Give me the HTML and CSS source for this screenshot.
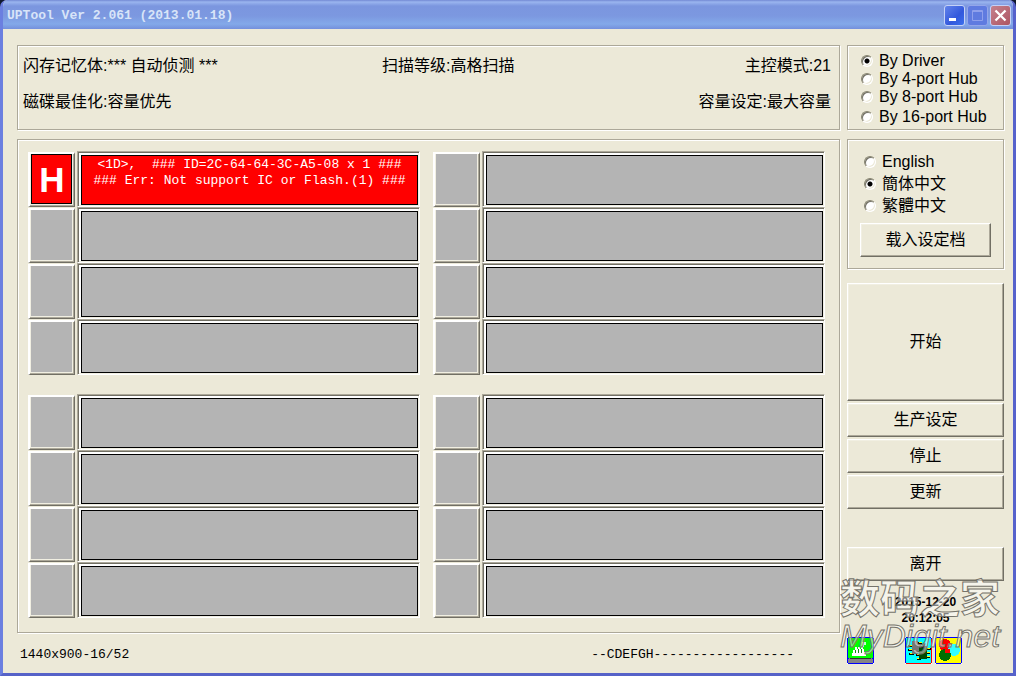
FILE: index.html
```html
<!DOCTYPE html>
<html lang="zh-CN">
<head>
<meta charset="utf-8">
<title>UPTool Ver 2.061</title>
<link rel="stylesheet" href="styles.css">
</head>
<body>
<div class="window">
  <header class="titlebar">
    <h1 class="title">UPTool Ver 2.061 (2013.01.18)</h1>
    <div class="caption-buttons">
      <button class="caption" type="button" aria-label="Minimize"><svg viewBox="0 0 19 19"><path d="M4 12h7v3H4z" fill="#fff"/></svg></button>
      <button class="caption caption-max" type="button" aria-label="Maximize" disabled><svg viewBox="0 0 19 19"><path d="M4.500 4.500h10v10h-10zM4 5.500h11" fill="none" stroke="#8fa0ec"/></svg></button>
      <button class="caption caption-close" type="button" aria-label="Close"><svg viewBox="0 0 19 19"><path d="M4.500 4.500l10 10M14.500 4.500l-10 10" stroke="#fff" stroke-width="2.300"/></svg></button>
    </div>
  </header>
  <div class="content">
    <main class="main">
      <section class="group info">
        <span>闪存记忆体:*** 自动侦测 ***</span>
        <span>扫描等级:高格扫描</span>
        <span class="info-right">主控模式:21</span>
        <span>磁碟最佳化:容量优先</span>
        <span class="info-right info-wide">容量设定:最大容量</span>
      </section>
      <section class="group ports">
        <div class="port active"><button type="button" class="slot">H</button><div class="status"><p class="message">&lt;1D&gt;,&nbsp; ### ID=2C-64-64-3C-A5-08 x 1 ###<br>### Err: Not support IC or Flash.(1) ###</p></div></div>
        <div class="port"><button type="button" class="slot" aria-label="Port 9"></button><div class="status"><p class="message"></p></div></div>
        <div class="port"><button type="button" class="slot" aria-label="Port 2"></button><div class="status"><p class="message"></p></div></div>
        <div class="port"><button type="button" class="slot" aria-label="Port 10"></button><div class="status"><p class="message"></p></div></div>
        <div class="port"><button type="button" class="slot" aria-label="Port 3"></button><div class="status"><p class="message"></p></div></div>
        <div class="port"><button type="button" class="slot" aria-label="Port 11"></button><div class="status"><p class="message"></p></div></div>
        <div class="port"><button type="button" class="slot" aria-label="Port 4"></button><div class="status"><p class="message"></p></div></div>
        <div class="port"><button type="button" class="slot" aria-label="Port 12"></button><div class="status"><p class="message"></p></div></div>
        <div class="port bank"><button type="button" class="slot" aria-label="Port 5"></button><div class="status"><p class="message"></p></div></div>
        <div class="port bank"><button type="button" class="slot" aria-label="Port 13"></button><div class="status"><p class="message"></p></div></div>
        <div class="port"><button type="button" class="slot" aria-label="Port 6"></button><div class="status"><p class="message"></p></div></div>
        <div class="port"><button type="button" class="slot" aria-label="Port 14"></button><div class="status"><p class="message"></p></div></div>
        <div class="port"><button type="button" class="slot" aria-label="Port 7"></button><div class="status"><p class="message"></p></div></div>
        <div class="port"><button type="button" class="slot" aria-label="Port 15"></button><div class="status"><p class="message"></p></div></div>
        <div class="port"><button type="button" class="slot" aria-label="Port 8"></button><div class="status"><p class="message"></p></div></div>
        <div class="port"><button type="button" class="slot" aria-label="Port 16"></button><div class="status"><p class="message"></p></div></div>
      </section>
      <footer class="footer"><span>1440x900-16/52</span><span>--CDEFGH------------------</span></footer>
    </main>
    <aside class="side">
      <div class="group hubs" role="radiogroup" aria-label="Hub">
        <label class="option"><input type="radio" name="hub" checked>By Driver</label>
        <label class="option"><input type="radio" name="hub">By 4-port Hub</label>
        <label class="option"><input type="radio" name="hub">By 8-port Hub</label>
        <label class="option"><input type="radio" name="hub">By 16-port Hub</label>
      </div>
      <div class="group langs" role="radiogroup" aria-label="Language">
        <label class="option"><input type="radio" name="lang">English</label>
        <label class="option"><input type="radio" name="lang" checked>簡体中文</label>
        <label class="option"><input type="radio" name="lang">繁體中文</label>
        <button class="push load" type="button">载入设定档</button>
      </div>
      <div class="actions">
        <button class="push start" type="button">开始</button>
        <button class="push" type="button">生产设定</button>
        <button class="push" type="button">停止</button>
        <button class="push" type="button">更新</button>
      </div>
      <button class="push exit" type="button">离开</button>
      <div class="stamp">
        <time class="clock">2015-12-20<br>20:12:05</time>
        <div class="tools">
          <button class="tool" type="button" aria-label="Memory">
            <svg viewBox="0 0 27 27" shape-rendering="crispEdges"><path d="M1 0h25v1h1v25h-1v1H1v-1H0V1h1z" fill="#00f"/><path d="M1 1h25v20H1z" fill="#0f0"/><path d="M1 22l2-1h21l2 1v4H1z" fill="#858585"/><path d="M3 21h21v1H3z" fill="#333"/><path d="M5 19v-3h1v-3h2v-3h2v2h1v-2h2v2h1v-2h2v2h1v3h2v4z" fill="#fff"/><path d="M8.500 13v3M11.500 12v4M14.500 12v4" stroke="#138a13"/><path d="M15 5h4v3h-2v2h-2z" fill="#caffca"/></svg>
          </button>
          <button class="tool tool-chip" type="button" aria-label="Chips">
            <svg viewBox="0 0 27 27" shape-rendering="crispEdges"><path d="M1 0h25v1h1v25h-1v1H1v-1H0V1h1z" fill="#00f"/><path d="M1 1h25v25H1z" fill="#0ff"/><path d="M1 26.500h25M26.500 2v24" stroke="#f00"/><path d="M3 8h5v2H3zM3 12h5v2H3zM4 16h5v2H4zM13 5h4v2h-4zM10 13h5v2h-5zM11 17h5v2h-5zM12 21h4v2h-4zM21 11h5v2h-5zM21 15h4v2h-4zM21 19h4v2h-4z" fill="#000"/><path d="M4 8h3v1H4zM4 12h3v1H4zM5 16h3v1H5zM14 5h3v1h-3zM11 13h3v1h-3zM12 17h3v1h-3zM12 21h3v1h-3zM22 11h3v1h-3zM22 15h3v1h-3zM22 19h3v1h-3z" fill="#ff0"/><path d="M7 4h6v3h3v7h-3v3H7z" fill="#777"/><path d="M14 9h8v13h-8z" fill="#004b00"/><path d="M14 9h8v2h-8z" fill="#222"/></svg>
          </button>
          <button class="tool" type="button" aria-label="Colors">
            <svg viewBox="0 0 27 27" shape-rendering="crispEdges"><path d="M1 0h25v1h1v25h-1v1H1v-1H0V1h1z" fill="#00f"/><path d="M1 1h25v25H1z" fill="#ff0"/><circle cx="10" cy="8" r="6" fill="red"/><circle cx="19" cy="13" r="6" fill="#3ff"/><circle cx="10" cy="18" r="6" fill="#007000"/><path d="M10 12h5v4h-5z" fill="red"/></svg>
          </button>
        </div>
        <div class="watermark"><span class="mark-name">数码之家</span><span class="mark-site">MyDigit.net</span></div>
      </div>
    </aside>
  </div>
</div>
</body>
</html>
```

FILE: styles.css
```css
* { box-sizing: border-box; }

body {
  margin: 0;
  background: #10182e;
  color: #000;
  font: 16px/20px "Liberation Sans", "Noto Sans CJK SC", sans-serif;
}

button { font: inherit; color: inherit; }
svg { display: block; width: 100%; height: 100%; }

.window {
  display: flex;
  flex-direction: column;
  min-height: 100vh;
  border: solid #6b7fe0;
  border-width: 0 3px 3px;
  border-right-color: #5662cc;
  border-bottom-color: #5662c8;
  border-radius: 7px 7px 0 0;
  background: #ece9d8;
  overflow: hidden;
}

.titlebar {
  display: flex;
  align-items: center;
  justify-content: space-between;
  height: 29px;
  margin: 0 -3px;
  padding: 2px 5px 0 7px;
  background: linear-gradient(#7389d4 0, #9ab5ef 2px, #7b96df 6px, #7c98e0 16px, #83a9e9 24px, #7490dc 29px);
}

.title {
  margin: 0;
  color: #d8e4f8;
  font: bold 13px/20px "Liberation Mono", monospace;
}

.caption-buttons { display: flex; gap: 2px; }

.caption {
  width: 21px;
  height: 21px;
  padding: 0;
  border: 1px solid #c4d1f7;
  border-radius: 3px;
  background: linear-gradient(135deg, #6283ea, #3258dc 60%, #3c70ee);
}

.caption-max { border-color: #94a6ea; background: #5f7be0; }
.caption-close { background: linear-gradient(135deg, #c5818d, #ae5562); }

.content {
  display: flex;
  flex: 1;
  gap: 7px;
  padding: 16px 9px 0 14px;
}

.main { flex: 1; min-width: 0; }
.side { display: flex; flex-direction: column; width: 157px; }

.group {
  border: 1px solid #aca899;
  box-shadow: 1px 1px 0 #fff, inset 1px 1px 0 #fff;
}

.info {
  display: grid;
  grid-template-columns: 4fr 3fr 2fr;
  row-gap: 16px;
  padding: 10px 8px 17px 5px;
  margin-bottom: 9px;
}

.info-right { text-align: right; }
.info-wide { grid-column: 2 / -1; }

.ports {
  display: grid;
  grid-template-columns: 1fr 1fr;
  column-gap: 13px;
  padding: 11px 14px 14px 10px;
}

.port { display: flex; gap: 2px; }
.bank { margin-top: 19px; }

.slot {
  width: 47px;
  height: 55px;
  margin: 1px 0 0;
  padding: 0;
  border: solid;
  border-width: 2px 1px 1px 2px;
  border-color: #fff #716f64 #716f64 #fff;
  background: #b4b4b4;
  box-shadow: inset -1px -1px 0 #aca899, inset 1px 0 0 #f1efe2, inset -2px -2px 0 #f1efe2;
}

.status {
  flex: 1;
  min-width: 0;
  min-height: 56px;
  border: 1px solid;
  border-color: #aca899 #fff #fff #aca899;
  background: #fff;
  box-shadow: inset 1px 1px 0 #716f64, inset -1px -1px 0 #f1efe2;
  padding: 3px 1px 1px 3px;
}

.message {
  min-height: 50px;
  margin: 0;
  padding-top: 1px;
  border: 1px solid #000;
  background: #b4b4b4;
  color: #fff;
  font: 13px/16px "Liberation Mono", monospace;
  text-align: center;
}

.active .message { background: #f00; }

.active .slot {
  background: linear-gradient(#f00, #f00) 2px 1px / 39px 48px no-repeat #000;
  color: #fff;
  font: bold 35px/40px "Liberation Sans", sans-serif;
}

.footer {
  display: flex;
  justify-content: space-between;
  padding: 12px 46px 7px 3px;
  font: 13px/20px "Liberation Mono", monospace;
}

.hubs { padding: 6px 0 3px 13px; margin-bottom: 9px; }
.option { display: flex; align-items: center; gap: 6px; line-height: 18px; }
.hubs .option:last-child { margin-top: 2px; }
.langs { padding: 11px 12px; margin-bottom: 14px; }
.langs .option { padding-left: 4px; line-height: 22px; }

.option input {
  appearance: none;
  width: 12px;
  height: 12px;
  margin: 0;
  border: 1px solid;
  border-color: #86836f #fff #fff #86836f;
  border-radius: 50%;
  background: #fff;
  box-shadow: inset 1px 1px 0 #716f64, inset -1px -1px 0 #ece9d8;
}

.option input:checked { background: radial-gradient(circle, #000 2px, #fff 3px); }

.push {
  display: block;
  width: 100%;
  height: 34px;
  padding: 0;
  border: 1px solid;
  border-color: #fff #716f64 #716f64 #fff;
  background: #ece9d8;
  box-shadow: inset -1px -1px 0 #aca899, inset 1px 1px 0 #f1efe2;
}

.load { margin-top: 6px; }
.actions { display: grid; gap: 2px; margin-bottom: 38px; }
.start { height: 118px; }

.stamp { position: relative; padding-top: 13px; }

.clock {
  display: block;
  font: bold 12px/16px "Liberation Sans", sans-serif;
  text-align: center;
}

.tools { display: flex; gap: 3px; margin-top: 11px; }
.tool { width: 27px; height: 27px; padding: 0; border: 0; background: #fff; }
.tool-chip { margin-left: 28px; }

.watermark {
  position: absolute;
  top: -7px;
  left: -7px;
  color: rgba(255, 255, 255, 0.5);
  pointer-events: none;
  white-space: nowrap;
  -webkit-text-stroke: 1px #75736a;
}

.mark-name { display: block; font: bold 40px/44px "Noto Sans CJK SC", sans-serif; }
.mark-site { display: block; font: italic 32px/36px "Liberation Sans", sans-serif; }
```
